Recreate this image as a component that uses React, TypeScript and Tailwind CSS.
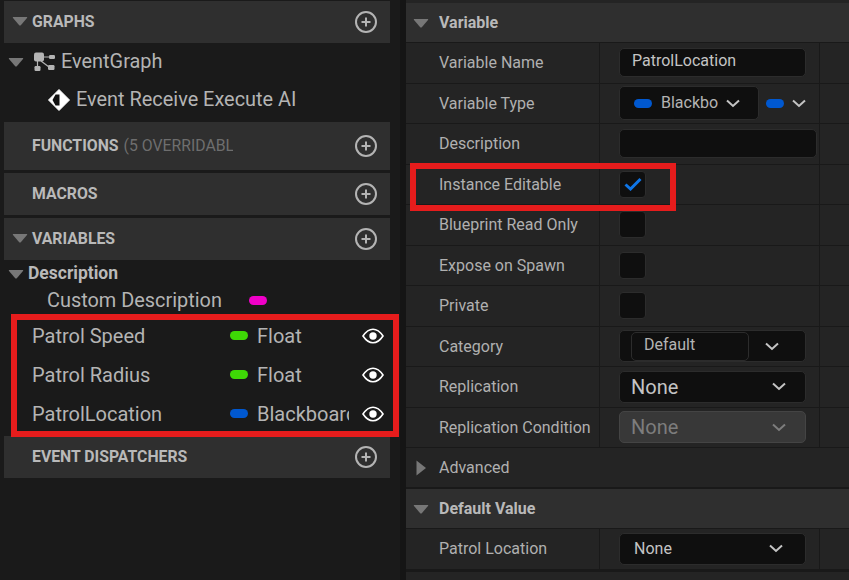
import React from "react";

const font = { fontFamily: "Roboto, sans-serif" };

function Tri({ right = false, className = "" }: { right?: boolean; className?: string }) {
  return (
    <svg width="16" height="16" viewBox="0 0 16 16" className={`shrink-0 ${className}`}>
      {right ? (
        <path d="M3.5 0.5 L13 8 L3.5 15.5 Z" fill="#777" />
      ) : (
        <path d="M1 4 H15 Q15.5 4 15 5 L8.8 12.2 Q8 13 7.2 12.2 L1 5 Q0.5 4 1 4 Z" fill="#777" />
      )}
    </svg>
  );
}

function Plus() {
  return (
    <svg width="24" height="24" viewBox="0 0 24 24" className="shrink-0">
      <circle cx="12" cy="12" r="10" fill="none" stroke="#b4b4b4" strokeWidth="2" />
      <path d="M12 7.5v9M7.5 12h9" stroke="#b4b4b4" strokeWidth="2" />
    </svg>
  );
}

function Eye() {
  return (
    <svg width="22" height="16" viewBox="0 0 22 16" className="shrink-0">
      <path d="M1 8 Q5.5 1.2 11 1.2 Q16.5 1.2 21 8 Q16.5 14.8 11 14.8 Q5.5 14.8 1 8 Z" fill="none" stroke="#fff" strokeWidth="1.6" />
      <circle cx="11" cy="8" r="3.7" fill="#fff" />
    </svg>
  );
}

function Chev({ className = "" }: { className?: string }) {
  return (
    <svg width="14" height="9" viewBox="0 0 14 9" className={`shrink-0 ${className}`}>
      <path d="M1 1.5 L7 7 L13 1.5" fill="none" stroke="currentColor" strokeWidth="2" />
    </svg>
  );
}

function Pill({ color }: { color: string }) {
  return <span className={`block h-[9px] w-[18px] shrink-0 rounded-full ${color}`} />;
}

function Header({ children, tri = false }: { children: React.ReactNode; tri?: boolean }) {
  return (
    <div className="flex h-[42px] items-center bg-[#2f2f2f] pl-[8px] pr-[12px]">
      <div className="w-[20px] shrink-0">{tri && <Tri className="relative top-[-1px]" />}</div>
      <div className="flex min-w-0 flex-1 items-center text-[15.8px] font-bold leading-none text-[#b9b9b9]">
        {children}
      </div>
      <Plus />
    </div>
  );
}

function VarRow({ name, pill, type }: { name: string; pill: string; type: string }) {
  return (
    <div className="flex h-[39px] items-center pl-[28px] text-[20px] leading-none text-[#b4b4b4]">
      <span className="w-[198px] shrink-0">{name}</span>
      <Pill color={pill} />
      <span className="ml-[9px] h-[24px] w-[92px] shrink-0 overflow-hidden whitespace-nowrap leading-[24px]">{type}</span>
      <span className="ml-[13px]">
        <Eye />
      </span>
    </div>
  );
}

function Row({ label, children }: { label: string; children?: React.ReactNode }) {
  return (
    <div className="flex h-[40.5px] border-b border-[#191919] bg-[#242424]">
      <div className="flex w-[194px] shrink-0 items-center border-r border-[#191919] pl-[33px] pt-[1px] text-[16px] text-[#b0b0b0]">
        {label}
      </div>
      <div className="flex w-[220px] shrink-0 items-center border-r border-[#191919] pl-[19px]">{children}</div>
    </div>
  );
}

function Check({ checked = false }: { checked?: boolean }) {
  return (
    <div className="flex h-[27px] w-[27px] items-center justify-center rounded-[4px] border border-[#2c2c2c] bg-[#0f0f0f]">
      {checked && (
        <svg width="18" height="14" viewBox="0 0 18 14">
          <path d="M1.5 7.5 L6.5 12 L16.5 2" fill="none" stroke="#0f75e6" strokeWidth="3" />
        </svg>
      )}
    </div>
  );
}

function Select({ value, big = false, disabled = false }: { value: string; big?: boolean; disabled?: boolean }) {
  return (
    <div
      className={`flex h-[32px] w-[187px] items-center justify-between rounded-[5px] border ${
        disabled ? "border-[#444] bg-[#383838] text-[#7d7d7d]" : "border-[#2c2c2c] bg-[#0f0f0f] text-[#c4c4c4]"
      } ${big ? "pl-[11px] pr-[19px] text-[20px]" : "pl-[14px] pr-[22px] text-[16px]"}`}
    >
      <span className="leading-none">{value}</span>
      <Chev className={disabled ? "text-[#7d7d7d]" : "text-[#c4c4c4]"} />
    </div>
  );
}

function SectionHead({ children }: { children: React.ReactNode }) {
  return (
    <div className="flex h-[40px] items-center border-b border-[#191919] bg-[#2f2f2f] pl-[7px]">
      <Tri />
      <span className="ml-[10px] text-[16px] font-bold text-[#b9b9b9]">{children}</span>
    </div>
  );
}

export default function App() {
  return (
    <div style={font} className="relative flex h-[580px] w-[849px] overflow-hidden bg-[#1a1a1a]">
      {/* left panel */}
      <div className="ml-[4px] w-[386px] shrink-0 pt-[1px]">
        <Header tri>GRAPHS</Header>
        <div className="h-[79px] bg-[#1a1a1a] pt-[1px] text-[19.9px] leading-none text-[#b4b4b4]">
          <div className="flex h-[36px] items-center pl-[4px]">
            <Tri />
            <svg width="22" height="20" viewBox="0 0 22 20" className="ml-[9px] shrink-0">
              <rect x="1" y="0.5" width="10" height="9" rx="2" fill="#b4b4b4" />
              <rect x="16" y="3" width="6" height="4" rx="1.2" fill="#b4b4b4" />
              <rect x="1.5" y="14" width="6" height="5" rx="1.2" fill="#b4b4b4" />
              <rect x="15" y="13" width="6.5" height="5" rx="1.2" fill="#b4b4b4" />
              <path d="M10 5h7M4.5 9v6M8 9l8 6" stroke="#b4b4b4" strokeWidth="1.2" />
            </svg>
            <span className="ml-[6px]">EventGraph</span>
          </div>
          <div className="flex h-[40px] items-center pl-[44px]">
            <svg width="22" height="22" viewBox="0 0 22 22" className="shrink-0">
              <path d="M11 0.5 L21.5 11 L11 21.5 L0.5 11 Z" fill="#fff" stroke="#fff" strokeLinejoin="round" />
              <path d="M11.5 5.5 H7.5 L4.5 11 L7.5 16.5 H11.5 Z" fill="#111" />
            </svg>
            <span className="ml-[6px]">Event Receive Execute AI</span>
          </div>
        </div>
        <div className="flex h-[48px] flex-col justify-center bg-[#2f2f2f]">
          <div className="flex items-center pl-[28px] pr-[12px] text-[15.8px] font-bold leading-none text-[#b9b9b9]">
            <span>FUNCTIONS</span>
            <span className="ml-[5px] h-[18px] w-[109px] overflow-hidden whitespace-nowrap font-normal leading-[18px] text-[#6e6e6e]">(5 OVERRIDABLE)</span>
            <span className="flex-1" />
            <Plus />
          </div>
        </div>
        <div className="mt-[3px]">
          <Header>MACROS</Header>
        </div>
        <div className="mt-[3px]">
          <Header tri>VARIABLES</Header>
        </div>
        <div className="flex h-[26px] items-center pl-[4px] pt-[1px] text-[17.5px] font-bold leading-none text-[#b9b9b9]">
          <Tri />
          <span className="ml-[4px]">Description</span>
        </div>
        <div className="flex h-[28px] items-center pl-[43px] pt-[1px] text-[19.9px] leading-none text-[#b4b4b4]">
          <span className="w-[202px] shrink-0">Custom Description</span>
          <Pill color="bg-[#f000c8]" />
        </div>
        <div className="mt-[2px]">
          <VarRow name="Patrol Speed" pill="bg-[#3ed806]" type="Float" />
          <VarRow name="Patrol Radius" pill="bg-[#3ed806]" type="Float" />
          <VarRow name="PatrolLocation" pill="bg-[#0058d0]" type="Blackboard" />
        </div>
        <div className="mt-[3px]">
          <Header>EVENT DISPATCHERS</Header>
        </div>
      </div>

      {/* gutter */}
      <div className="w-[16px] shrink-0 bg-[#1a1a1a]">
        <div className="ml-[10px] h-full w-[6px] bg-[#151515]" />
      </div>

      {/* right panel */}
      <div className="flex-1 bg-[#242424] pt-[3px]">
        <SectionHead>Variable</SectionHead>
        <Row label="Variable Name">
          <div className="flex h-[29px] w-[187px] items-center rounded-[5px] border border-[#2c2c2c] bg-[#0f0f0f] pb-[3px] pl-[12px] text-[16px] text-[#c4c4c4]">
            PatrolLocation
          </div>
        </Row>
        <Row label="Variable Type">
          <div className="flex h-[34px] w-[140px] items-center rounded-[5px] border border-[#2c2c2c] bg-[#0f0f0f] pl-[14px] text-[16px] text-[#b4b4b4]">
            <Pill color="bg-[#0058d0]" />
            <span className="ml-[9px]">Blackbo</span>
            <Chev className="ml-[8px] text-[#c4c4c4]" />
          </div>
          <span className="ml-[7px]">
            <Pill color="bg-[#0058d0]" />
          </span>
          <Chev className="ml-[8px] text-[#c4c4c4]" />
        </Row>
        <Row label="Description">
          <div className="h-[29px] w-[198px] rounded-[5px] border border-[#2c2c2c] bg-[#0f0f0f]" />
        </Row>
        <Row label="Instance Editable">
          <Check checked />
        </Row>
        <Row label="Blueprint Read Only">
          <Check />
        </Row>
        <Row label="Expose on Spawn">
          <Check />
        </Row>
        <Row label="Private">
          <Check />
        </Row>
        <Row label="Category">
          <div className="flex h-[32px] w-[187px] items-center rounded-[5px] border border-[#2c2c2c] bg-[#0f0f0f] pl-[11px] text-[16px] text-[#b4b4b4]">
            <div className="flex h-[29px] w-[118px] items-center rounded-[5px] border border-[#2c2c2c] pb-[2px] pl-[12px]">Default</div>
            <Chev className="ml-[16px] text-[#c4c4c4]" />
          </div>
        </Row>
        <Row label="Replication">
          <Select value="None" big />
        </Row>
        <Row label="Replication Condition">
          <Select value="None" big disabled />
        </Row>
        <div className="flex h-[39px] items-center bg-[#242424] pl-[7px]">
          <Tri right />
          <span className="ml-[10px] text-[16px] text-[#b0b0b0]">Advanced</span>
        </div>
        <div className="h-[2px] bg-[#191919]" />
        <SectionHead>Default Value</SectionHead>
        <Row label="Patrol Location">
          <Select value="None" />
        </Row>
        <div className="h-[2px] bg-[#191919]" />
      </div>

      {/* annotation boxes */}
      <div className="absolute left-[11px] top-[314px] h-[123px] w-[388px] border-[6px] border-[#e61c1c]" />
      <div className="absolute left-[410px] top-[163px] h-[48px] w-[266px] border-[6px] border-[#e61c1c]" />
    </div>
  );
}
